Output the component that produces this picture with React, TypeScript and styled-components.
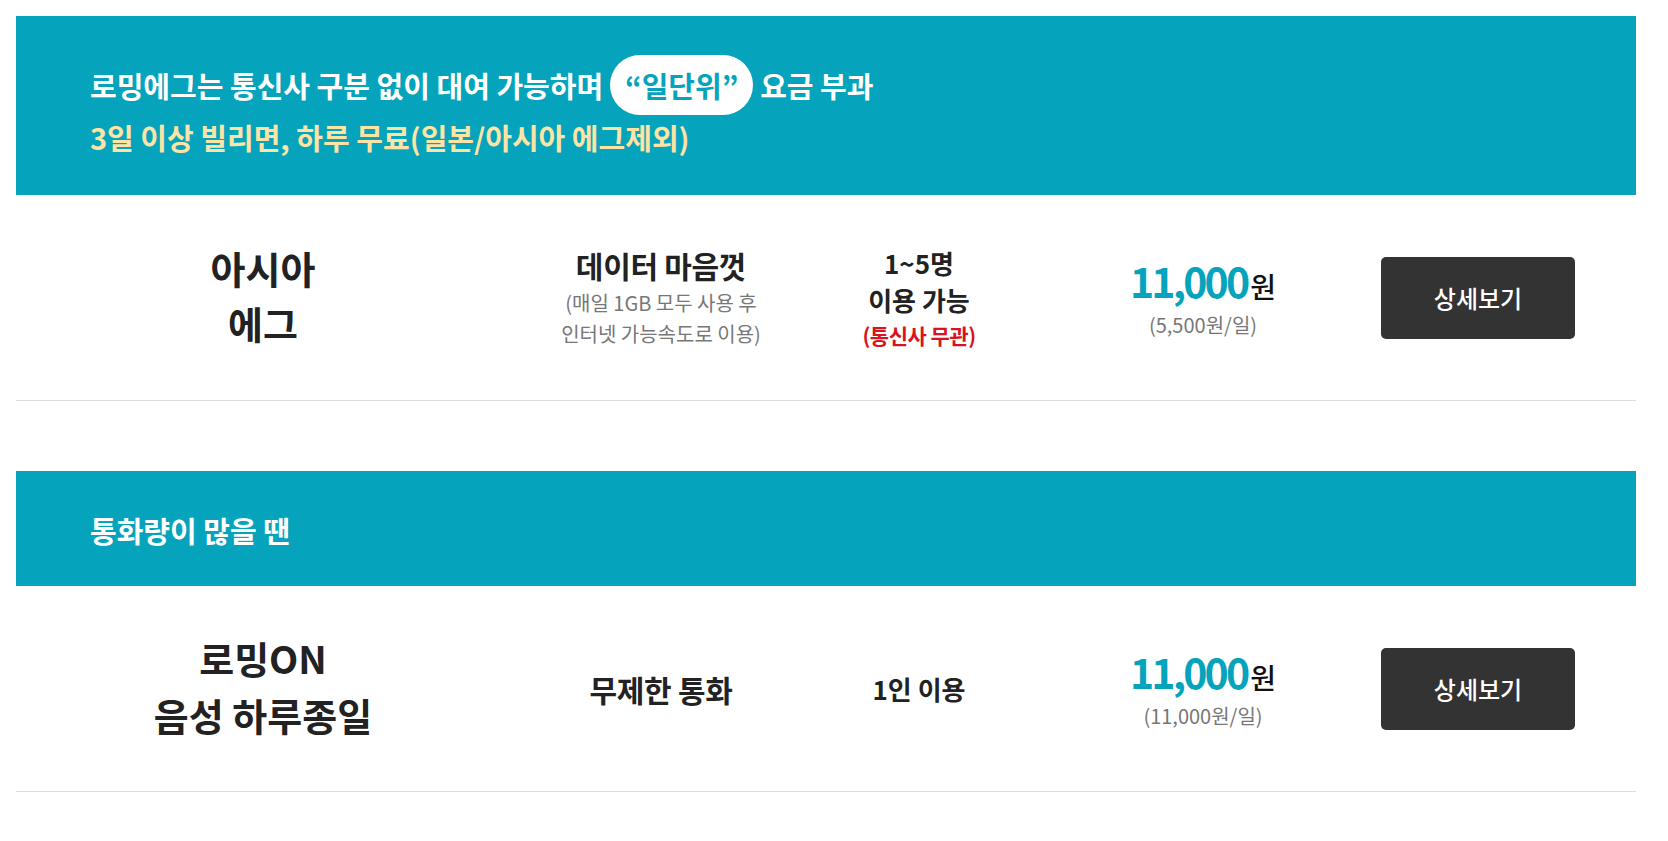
import React from "react";
import styled, { createGlobalStyle } from "styled-components";

const Global = createGlobalStyle`
  html, body { margin: 0; padding: 0; background: #fff; }
  body { font-family: "Noto Sans CJK KR", "Noto Sans", sans-serif; color: #222; }
  * { box-sizing: border-box; }
`;

const TEAL = "#05a4bc";

const Page = styled.div`
  padding: 16px 0 0 16px;
  width: 1636px;
`;

const Section = styled.section<{ $gap?: number }>`
  margin-top: ${(p) => p.$gap ?? 0}px;
`;

const Banner = styled.div`
  background: ${TEAL};
  padding: 39px 74px 38px;
  color: #fff;
  font-weight: 700;
  font-size: 29px;
  letter-spacing: 0;
`;

const BannerLine = styled.div`
  display: flex;
  align-items: center;
  gap: 7px;
  height: 60px;
  white-space: pre;
`;

const Pill = styled.span`
  display: inline-flex;
  align-items: center;
  justify-content: center;
  height: 60px;
  width: 143px;
  border-radius: 30px;
  background: #fff;
  color: ${TEAL};
`;

const BannerSub = styled.div`
  margin-top: 2px;
  line-height: 40px;
  color: #fde3a4;
`;

const SmallBanner = styled.div`
  background: ${TEAL};
  height: 115px;
  display: flex;
  align-items: center;
  padding: 3px 74px 0;
  color: #fff;
  font-weight: 700;
  font-size: 29px;
`;

const Row = styled.div`
  display: grid;
  grid-template-columns: 494px 302px 214px 354px 1fr;
  align-items: center;
  height: 206px;
  border-bottom: 1px solid #dedede;
`;

const Cell = styled.div`
  text-align: center;
`;

const NameCell = styled(Cell)`
  padding-bottom: 5px;
`;

const Name = styled.div<{ $lh: number }>`
  font-size: 38px;
  font-weight: 700;
  line-height: ${(p) => p.$lh}px;
  color: #222;
`;

const Feature = styled.div`
  font-size: 30px;
  font-weight: 700;
  letter-spacing: -0.3px;
  line-height: 38px;
  color: #222;
`;

const FeatureNotes = styled.div`
  margin-top: 3px;
`;

const FeatureNote = styled.div`
  font-size: 20px;
  font-weight: 400;
  line-height: 31px;
  color: #777;
`;

const Users = styled.div`
  font-size: 26px;
  font-weight: 700;
  line-height: 37px;
  color: #222;
`;

const Notice = styled.div`
  font-size: 21px;
  font-weight: 700;
  letter-spacing: -0.5px;
  line-height: 34px;
  color: #d7141f;
`;

const PriceLine = styled.div`
  padding-top: 3px;
  line-height: 44px;
  white-space: nowrap;
`;

const Amount = styled.span`
  font-size: 41px;
  font-weight: 700;
  letter-spacing: -2.8px;
  color: ${TEAL};
`;

const Won = styled.span`
  font-size: 28px;
  font-weight: 500;
  color: #111;
  margin-left: 3px;
`;

const PerDay = styled.div`
  margin-top: -3px;
  font-size: 20px;
  line-height: 30px;
  color: #777;
`;

const ButtonCell = styled.div`
  display: flex;
  padding-left: 1px;
`;

const DetailButton = styled.button`
  width: 194px;
  height: 82px;
  border: 0;
  border-radius: 5px;
  background: #333;
  color: #fff;
  font-family: inherit;
  font-size: 24px;
  font-weight: 500;
  cursor: pointer;
`;

type Plan = {
  name: string[];
  nameLh: number;
  feature: React.ReactNode;
  users: React.ReactNode;
  amount: string;
  perDay: string;
};

function PlanRow({ plan }: { plan: Plan }) {
  return (
    <Row>
      <NameCell>
        {plan.name.map((n) => (
          <Name key={n} $lh={plan.nameLh}>
            {n}
          </Name>
        ))}
      </NameCell>
      <Cell>{plan.feature}</Cell>
      <Cell>{plan.users}</Cell>
      <Cell>
        <PriceLine>
          <Amount>{plan.amount}</Amount>
          <Won>원</Won>
        </PriceLine>
        <PerDay>{plan.perDay}</PerDay>
      </Cell>
      <ButtonCell>
        <DetailButton>상세보기</DetailButton>
      </ButtonCell>
    </Row>
  );
}

const egg: Plan = {
  name: ["아시아", "에그"],
  nameLh: 55,
  feature: (
    <>
      <Feature>데이터 마음껏</Feature>
      <FeatureNotes>
        <FeatureNote>(매일 1GB 모두 사용 후</FeatureNote>
        <FeatureNote>인터넷 가능속도로 이용)</FeatureNote>
      </FeatureNotes>
    </>
  ),
  users: (
    <>
      <Users>1~5명</Users>
      <Users>이용 가능</Users>
      <Notice>(통신사 무관)</Notice>
    </>
  ),
  amount: "11,000",
  perDay: "(5,500원/일)",
};

const voice: Plan = {
  name: ["로밍ON", "음성 하루종일"],
  nameLh: 57,
  feature: <Feature>무제한 통화</Feature>,
  users: <Users>1인 이용</Users>,
  amount: "11,000",
  perDay: "(11,000원/일)",
};

export default function App() {
  return (
    <>
      <Global />
      <Page>
        <Section>
          <Banner>
            <BannerLine>
              <span>로밍에그는 통신사 구분 없이 대여 가능하며</span>
              <Pill>“일단위”</Pill>
              <span>요금 부과</span>
            </BannerLine>
            <BannerSub>3일 이상 빌리면, 하루 무료(일본/아시아 에그제외)</BannerSub>
          </Banner>
          <PlanRow plan={egg} />
        </Section>
        <Section $gap={70}>
          <SmallBanner>통화량이 많을 땐</SmallBanner>
          <PlanRow plan={voice} />
        </Section>
      </Page>
    </>
  );
}
